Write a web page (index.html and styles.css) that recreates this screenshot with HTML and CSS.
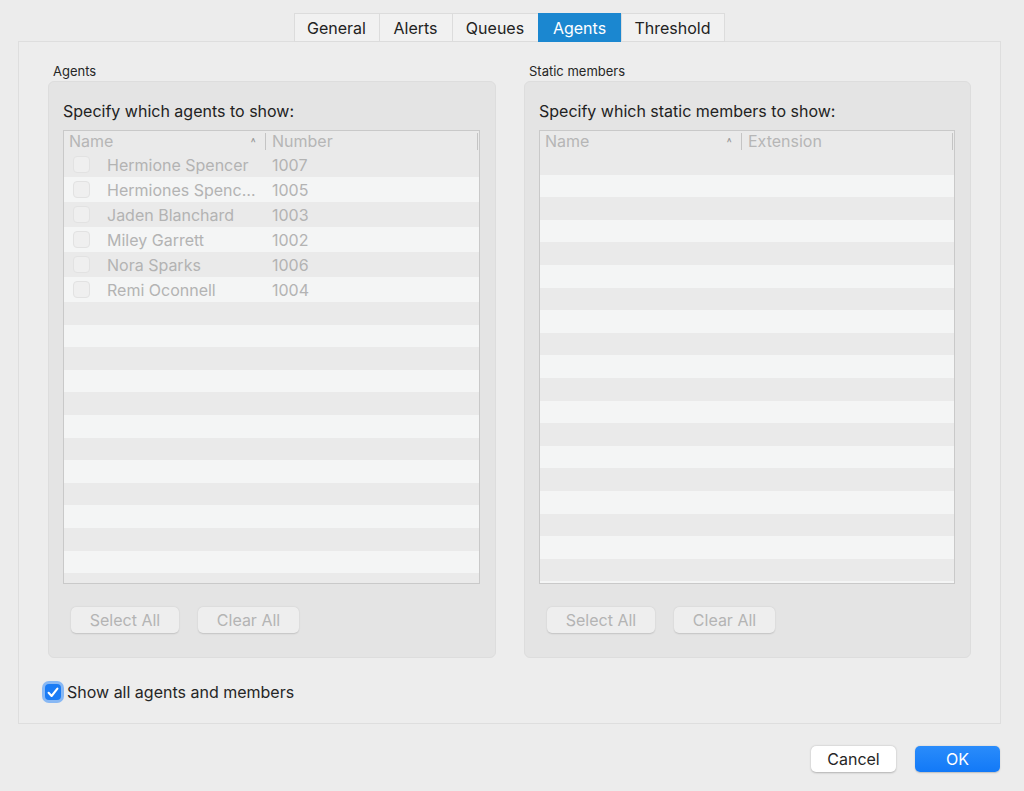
FILE: index.html
```html
<!DOCTYPE html>
<html>
<head>
<meta charset="utf-8">
<link rel="stylesheet" href="styles.css">
</head>
<body>
<div class="window">
  <div class="tabs">
    <div class="tab t-general">General</div>
    <div class="tab t-alerts">Alerts</div>
    <div class="tab t-queues">Queues</div>
    <div class="tab t-agents active">Agents</div>
    <div class="tab t-threshold">Threshold</div>
  </div>
  <div class="panel">
    <div class="groups">
      <div class="group">
        <div class="group-title">Agents</div>
        <div class="group-box">
          <div class="prompt">Specify which agents to show:</div>
          <div class="table">
            <div class="thead">
              <div class="th th-name">Name<span class="caret">&#x2C4;</span></div>
              <div class="th th-num">Number</div>
            </div>
            <div class="tbody">
              <div class="row"><span class="cb"></span><span class="c-name">Hermione Spencer</span><span class="c-num">1007</span></div>
              <div class="row"><span class="cb"></span><span class="c-name">Hermiones Spenc…</span><span class="c-num">1005</span></div>
              <div class="row"><span class="cb"></span><span class="c-name">Jaden Blanchard</span><span class="c-num">1003</span></div>
              <div class="row"><span class="cb"></span><span class="c-name">Miley Garrett</span><span class="c-num">1002</span></div>
              <div class="row"><span class="cb"></span><span class="c-name">Nora Sparks</span><span class="c-num">1006</span></div>
              <div class="row"><span class="cb"></span><span class="c-name">Remi Oconnell</span><span class="c-num">1004</span></div>
              <div class="filler"></div>
            </div>
          </div>
          <div class="btns">
            <div class="btn b-select">Select All</div>
            <div class="btn b-clear">Clear All</div>
          </div>
        </div>
      </div>
      <div class="group">
        <div class="group-title">Static members</div>
        <div class="group-box">
          <div class="prompt">Specify which static members to show:</div>
          <div class="table">
            <div class="thead">
              <div class="th th-name">Name<span class="caret">&#x2C4;</span></div>
              <div class="th th-num">Extension</div>
            </div>
            <div class="tbody">
              <div class="filler"></div>
            </div>
          </div>
          <div class="btns">
            <div class="btn b-select">Select All</div>
            <div class="btn b-clear">Clear All</div>
          </div>
        </div>
      </div>
    </div>
    <div class="showall">
      <span class="bigcb"><svg width="12" height="11" viewBox="0 0 12 11"><path d="M1.6 5.8 L4.6 9 L10.4 1.6" fill="none" stroke="#fff" stroke-width="2.1" stroke-linecap="round" stroke-linejoin="round"/></svg></span>
      <span class="showall-label">Show all agents and members</span>
    </div>
  </div>
  <div class="footer">
    <div class="fbtn cancel">Cancel</div>
    <div class="fbtn ok">OK</div>
  </div>
</div>
</body>
</html>
```
FILE: styles.css
```css
* { box-sizing: border-box; }
html, body {
  margin: 0;
  padding: 0;
  background: #ececec;
  font-family: Inter, "Liberation Sans", sans-serif;
  color: #262626;
}
.window {
  width: 1024px;
  height: 791px;
  padding: 13px 23px 0 18px;
}
.tabs {
  display: flex;
  justify-content: center;
  height: 29px;
  margin-left: -1px;
  position: relative;
  z-index: 2;
}
.tab {
  height: 29px;
  background: #f1f1f1;
  border: 1px solid #dcdcdc;
  border-right: none;
  font-size: 16px;
  display: flex;
  align-items: center;
  justify-content: center;
  color: #222;
}
.tab:last-child { border-right: 1px solid #dcdcdc; }
.t-general { width: 85px; }
.t-alerts { width: 73px; }
.t-queues { width: 86px; }
.t-agents { width: 83px; }
.t-threshold { width: 104px; }
.tab.active {
  background: #1b87d0;
  border-color: #1b87d0;
  color: #fff;
}
.panel {
  height: 683px;
  border: 1px solid #dedede;
  background: #ededed;
  margin-top: -1px;
  padding: 20px 29px 0 29px;
  display: flex;
  flex-direction: column;
}
.groups {
  display: flex;
  gap: 28px;
}
.group { width: 448px; }
.group + .group { width: 447px; }
.group-title {
  font-size: 13px;
  height: 18px;
  line-height: 18px;
  padding-left: 5px;
  color: #262626;
}
.group-box {
  margin-top: 1px;
  height: 577px;
  background: #e4e4e4;
  border: 1px solid #dddddd;
  border-radius: 6px;
  padding: 19px 15px 0 14px;
}
.prompt {
  font-size: 16px;
  height: 20px;
  line-height: 20px;
  color: #222;
}
.table {
  margin-top: 9px;
  height: 454px;
  border: 1px solid #c9c9c9;
  background: #eaeaea;
  display: flex;
  flex-direction: column;
  overflow: hidden;
}
.thead {
  height: 21px;
  flex: none;
  display: flex;
  align-items: center;
  font-size: 16px;
  color: #b6b6b6;
  background: #eaeaea;
}
.th-name {
  width: 202px;
  padding-left: 5px;
  display: flex;
  justify-content: space-between;
  align-items: center;
  border-right: 1px solid #c4c4c4;
  height: 17px;
  line-height: 17px;
}
.caret {
  font-size: 12px;
  color: #999;
  margin-right: 9px;
  line-height: 17px;
}
.th-num {
  flex: 1;
  padding-left: 6px;
  height: 17px;
  line-height: 17px;
  border-right: 1px solid #c4c4c4;
  margin-right: 1px;
}
.tbody {
  flex: 1;
  display: flex;
  flex-direction: column;
}
.row {
  height: 25px;
  flex: none;
  display: flex;
  align-items: center;
  font-size: 16px;
  color: #b3b3b3;
  background: #eaeaea;
}
.row:nth-child(even) { background: #f4f5f5; }
.cb {
  width: 17px;
  height: 17px;
  margin-left: 9px;
  border-radius: 4px;
  border: 1px solid #e2e2e2;
  background: #efefef;
}
.c-name { width: 165px; margin-left: 17px; white-space: nowrap; }
.filler {
  flex: 1;
  background: repeating-linear-gradient(#eaeaea 0, #eaeaea 22.6px, #f4f5f5 22.6px, #f4f5f5 45.2px);
}
.btns {
  display: flex;
  gap: 19px;
  margin-top: 23px;
  padding-left: 8px;
}
.btn {
  height: 26px;
  border-radius: 5px;
  background: #eeeeee;
  box-shadow: 0 0.5px 1.5px rgba(0,0,0,0.15);
  font-size: 16px;
  color: #b4b4b4;
  display: flex;
  align-items: center;
  justify-content: center;
}
.b-select { width: 108px; }
.b-clear { width: 101px; }
.showall {
  display: flex;
  align-items: center;
  margin-top: 23px;
  margin-left: -3px;
  height: 22px;
}
.bigcb {
  width: 16px;
  height: 16px;
  border-radius: 4px;
  background: #1b7cf5;
  box-shadow: 0 0 0 3px rgba(110,170,245,0.8);
  display: flex;
  align-items: center;
  justify-content: center;
}
.showall-label {
  font-size: 16px;
  margin-left: 6px;
  color: #262626;
}
.footer {
  display: flex;
  justify-content: flex-end;
  gap: 19px;
  margin-top: 22px;
  padding-right: 1px;
}
.fbtn {
  width: 85px;
  height: 26px;
  border-radius: 5px;
  font-size: 16px;
  display: flex;
  align-items: center;
  justify-content: center;
}
.cancel {
  background: #ffffff;
  color: #262626;
  box-shadow: 0 0.5px 2px rgba(0,0,0,0.25);
}
.ok {
  background: linear-gradient(#2a8cfb, #1279f7);
  color: #fff;
  box-shadow: 0 0.5px 1.5px rgba(0,0,0,0.2);
}
```
